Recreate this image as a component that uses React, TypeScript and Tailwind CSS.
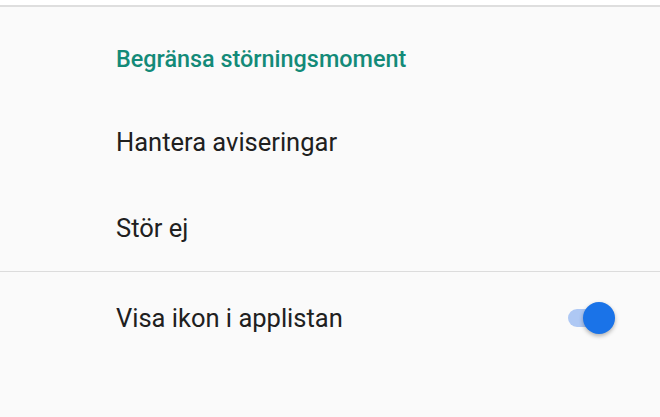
import React, { useState } from 'react';

export default function App() {
  const [showIcon, setShowIcon] = useState(true);

  return (
    <div className="w-[660px] h-[417px] overflow-hidden bg-[#fafafa] font-['Roboto',sans-serif]">
      <div className="h-[5px] bg-white" />
      <div className="h-[2px] bg-[#dedede]" />

      <div className="pl-[116px] pt-[37px] h-[92px]">
        <h2 className="text-[23.4px] font-medium text-[#138a78] leading-[30px]">
          Begränsa störningsmoment
        </h2>
      </div>

      <div className="pl-[116px] h-[86px] flex items-center">
        <span className="text-[25.5px] text-[#202020]">Hantera aviseringar</span>
      </div>
      <div className="pl-[116px] h-[86px] flex items-center">
        <span className="text-[25.5px] text-[#202020]">Stör ej</span>
      </div>

      <div className="h-px bg-[#dcdcdc]" />

      <div className="pl-[116px] pr-[42px] h-[92px] flex items-center justify-between">
        <span className="text-[25.5px] text-[#202020]">Visa ikon i applistan</span>
        <button
          onClick={() => setShowIcon(!showIcon)}
          className="relative w-[52px] h-[34px] flex items-center"
        >
          <span
            className={`absolute left-[2px] w-[46px] h-[18px] rounded-full ${showIcon ? 'bg-[#aec8f4]' : 'bg-[#b9b9b9]'}`}
          />
          <span
            className={`absolute w-[32px] h-[32px] rounded-full shadow-[0_2px_4px_rgba(0,0,0,0.3)] ${showIcon ? 'left-[17px] bg-[#1a73e8]' : 'left-0 bg-[#f1f1f1]'}`}
          />
        </button>
      </div>
    </div>
  );
}
